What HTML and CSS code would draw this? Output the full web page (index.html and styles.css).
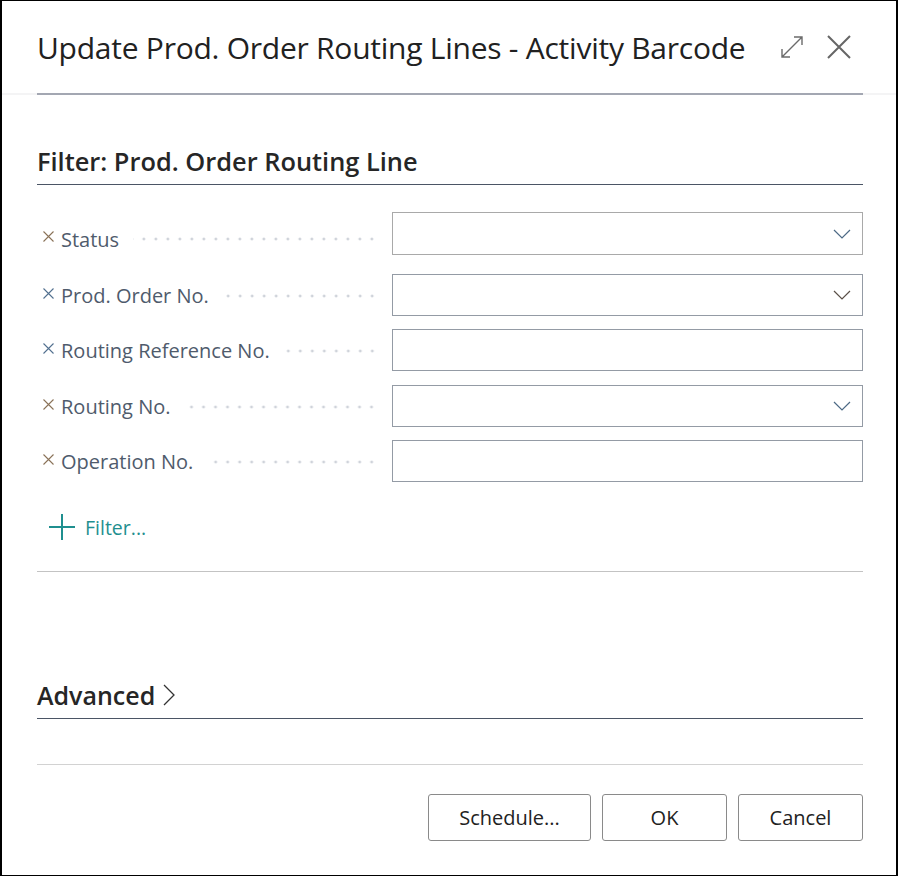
FILE: index.html
```html
<!DOCTYPE html>
<html lang="en">
<head>
    <meta charset="UTF-8">
    <title>Update Prod. Order Routing Lines - Activity Barcode</title>
    <link rel="stylesheet" href="styles.css">
</head>
<body>
    <div class="dialog">
        <div class="header">
            <div class="header-inner">
                <h1 class="title">Update Prod. Order Routing Lines - Activity Barcode</h1>
                <div class="header-icons">
                    <svg width="22" height="22" viewBox="0 0 22 22">
                        <path d="M1 21 L21 1 M13 1 H21 V9 M1 13 V21 H9" fill="none" stroke="#6b6b6b" stroke-width="1.4"/>
                    </svg>
                    <svg width="24" height="24" viewBox="0 0 24 24">
                        <path d="M1 1 L23 23 M23 1 L1 23" fill="none" stroke="#666" stroke-width="2"/>
                    </svg>
                </div>
            </div>
        </div>

        <div class="content">
            <h2 class="section-title">Filter: Prod. Order Routing Line</h2>

            <div class="filters">
                <div class="row first">
                    <div class="label">
                        <svg class="remove" width="11" height="11" viewBox="0 0 11 11"><path d="M0.5 0.5 L10.5 10.5 M10.5 0.5 L0.5 10.5" fill="none" stroke="#8a7258" stroke-width="1.1"/></svg>
                        <span>Status</span><span class="leader"></span>
                    </div>
                    <div class="field"><svg class="chev" width="18" height="10" viewBox="0 0 18 10"><path d="M1 1 L9 9 L17 1" fill="none" stroke="#4d6a85" stroke-width="1.2"/></svg></div>
                </div>
                <div class="row">
                    <div class="label">
                        <svg class="remove" width="11" height="11" viewBox="0 0 11 11"><path d="M0.5 0.5 L10.5 10.5 M10.5 0.5 L0.5 10.5" fill="none" stroke="#52708f" stroke-width="1.1"/></svg>
                        <span>Prod. Order No.</span><span class="leader"></span>
                    </div>
                    <div class="field"><svg class="chev" width="18" height="10" viewBox="0 0 18 10"><path d="M1 1 L9 9 L17 1" fill="none" stroke="#5a5048" stroke-width="1.2"/></svg></div>
                </div>
                <div class="row wide">
                    <div class="label">
                        <svg class="remove" width="11" height="11" viewBox="0 0 11 11"><path d="M0.5 0.5 L10.5 10.5 M10.5 0.5 L0.5 10.5" fill="none" stroke="#52708f" stroke-width="1.1"/></svg>
                        <span>Routing Reference No.</span><span class="leader"></span>
                    </div>
                    <div class="field"></div>
                </div>
                <div class="row">
                    <div class="label">
                        <svg class="remove" width="11" height="11" viewBox="0 0 11 11"><path d="M0.5 0.5 L10.5 10.5 M10.5 0.5 L0.5 10.5" fill="none" stroke="#8a7258" stroke-width="1.1"/></svg>
                        <span>Routing No.</span><span class="leader"></span>
                    </div>
                    <div class="field"><svg class="chev" width="18" height="10" viewBox="0 0 18 10"><path d="M1 1 L9 9 L17 1" fill="none" stroke="#4d6a85" stroke-width="1.2"/></svg></div>
                </div>
                <div class="row last">
                    <div class="label">
                        <svg class="remove" width="11" height="11" viewBox="0 0 11 11"><path d="M0.5 0.5 L10.5 10.5 M10.5 0.5 L0.5 10.5" fill="none" stroke="#8a7258" stroke-width="1.1"/></svg>
                        <span>Operation No.</span><span class="leader"></span>
                    </div>
                    <div class="field"></div>
                </div>
            </div>

            <div class="add-filter">
                <svg width="26" height="26" viewBox="0 0 26 26">
                    <path d="M13 0 V26 M0 13 H26" fill="none" stroke="#1f8f8f" stroke-width="2"/>
                </svg>
                <span>Filter...</span>
            </div>

            <div class="divider"></div>

            <div class="advanced">
                <span>Advanced</span>
                <svg width="14" height="24" viewBox="0 0 14 24">
                    <path d="M2 2 L12 12 L2 22" fill="none" stroke="#333" stroke-width="1.3"/>
                </svg>
            </div>

            <div class="divider footer-divider"></div>

            <div class="buttons">
                <button class="btn btn-schedule">Schedule...</button>
                <button class="btn">OK</button>
                <button class="btn">Cancel</button>
            </div>
        </div>
    </div>
</body>
</html>
```

FILE: styles.css
```css
body {
    margin: 0;
    font-family: "Open Sans", "Noto Sans", Arial, sans-serif;
    background-color: #fff;
}
.dialog {
    width: 898px;
    height: 876px;
    box-sizing: border-box;
    border: 1px solid #000;
    border-left-width: 2px;
    border-right-width: 2px;
    display: flex;
    flex-direction: column;
}
.header {
    border-bottom: 2px solid #f4f4f5;
}
.header-inner {
    margin: 0 33px -2px 35px;
    height: 92px;
    display: flex;
    align-items: center;
    justify-content: space-between;
    border-bottom: 2px solid #a3a7b2;
}
.title {
    margin: 0;
    font-size: 30px;
    font-weight: 400;
    color: #212121;
    letter-spacing: -0.25px;
    line-height: 41px;
}
.header-icons {
    display: flex;
    align-items: center;
    gap: 24px;
    padding-right: 12px;
}
.content {
    padding: 0 33px 0 35px;
    flex: 1;
    display: flex;
    flex-direction: column;
}
.section-title {
    margin: 49px 0 0 0;
    font-size: 25.4px;
    font-weight: 600;
    color: #262626;
    padding-bottom: 6px;
    border-bottom: 1px solid #4b5565;
    line-height: 34px;
}
.filters {
    margin-top: 27px;
}
.row {
    display: grid;
    grid-template-columns: 355px 1fr;
    align-items: center;
    height: 42px;
    margin-bottom: 13px;
}
.row.first {
    height: 43px;
    margin-bottom: 19px;
}
.row.wide {
    margin-bottom: 14px;
}
.row.last {
    margin-bottom: 0;
}
.label {
    display: flex;
    align-items: center;
    font-size: 20px;
    color: #4f5b6c;
    padding-top: 1px;
}
.row.first .label {
    padding-top: 11px;
}
.remove {
    margin: -5px 7px 0 6px;
    flex-shrink: 0;
}
.leader {
    flex: 1;
    height: 6px;
    margin: 0 14px 0 14px;
    background-image: radial-gradient(circle, #cfd3da 1.3px, transparent 1.7px);
    background-size: 12px 6px;
    background-repeat: repeat-x;
    background-position: right center;
}
.field {
    height: 100%;
    box-sizing: border-box;
    border: 1px solid #949ba5;
    display: flex;
    align-items: center;
    justify-content: flex-end;
    padding-right: 11px;
}
.row.first .field {
    border-color: #a9a9a9;
}
.add-filter {
    display: flex;
    align-items: center;
    gap: 10px;
    margin: 32px 0 0 12px;
    height: 26px;
    font-size: 19.5px;
    color: #1f8f8f;
}
.divider {
    border-top: 1px solid #c3c3c3;
    margin-top: 31px;
}
.advanced {
    margin-top: 106px;
    display: flex;
    align-items: center;
    gap: 7px;
    font-size: 25px;
    font-weight: 600;
    color: #262626;
    border-bottom: 1px solid #4b5565;
    padding-bottom: 6px;
    line-height: 34px;
}
.footer-divider {
    margin-top: 45px;
    border-top-color: #d2d2d2;
}
.buttons {
    display: flex;
    justify-content: flex-end;
    gap: 11px;
    margin-top: 29px;
}
.btn {
    font-family: "Open Sans", "Noto Sans", Arial, sans-serif;
    font-size: 20px;
    color: #222;
    background-color: #fff;
    border: 1px solid #8a8a8a;
    border-radius: 3px;
    height: 47px;
    width: 125px;
    cursor: pointer;
}
.btn-schedule {
    width: 163px;
}
```
